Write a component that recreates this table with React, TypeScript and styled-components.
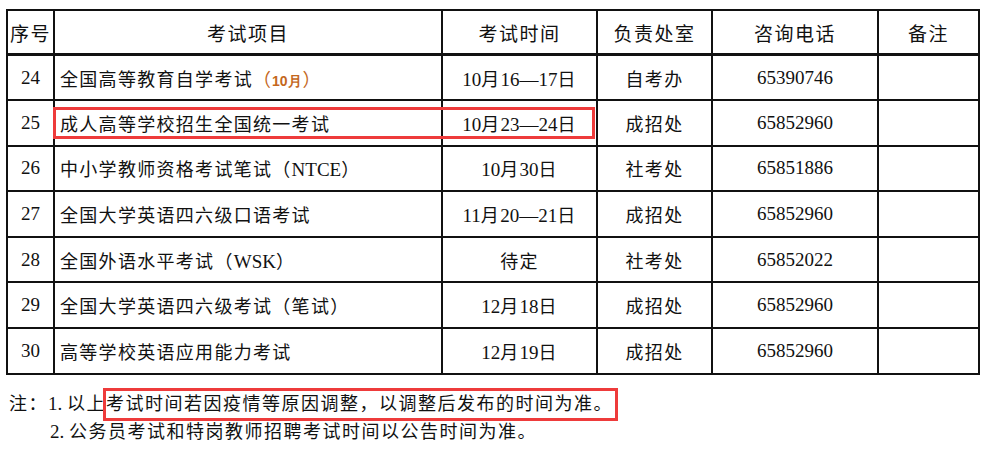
import React from "react";
import styled, { createGlobalStyle } from "styled-components";

const Global = createGlobalStyle`
  html, body { margin: 0; padding: 0; background: #fff; }
  body { font-family: "Liberation Serif", "Noto Sans CJK SC", serif; color: #111; }
  table { font-family: inherit; }
`;

const Page = styled.div`
  width: 985px;
  height: 458px;
  padding: 9px 0 0 6px;
  box-sizing: border-box;
  overflow: hidden;
  font-family: "Liberation Serif", "Noto Sans CJK SC", serif;
`;

const TableWrap = styled.div`
  position: relative;
  width: 972px;
`;

const Table = styled.table`
  border-collapse: collapse;
  table-layout: fixed;
  width: 972px;
  font-size: 18px;
  font-family: "Liberation Serif", "Noto Sans CJK SC", serif;
  color: #111;
`;

const HeadCell = styled.th`
  border: 2px solid #111;
  border-bottom-width: 3px;
  height: 42px;
  padding: 0;
  font-weight: normal;
  font-size: 19px;
  letter-spacing: 1.5px;
  text-align: center;
  vertical-align: middle;
`;

const Row = styled.tr`
  height: 45.6px;
`;

const Cell = styled.td<{ $align?: "left" | "center" }>`
  border: 2px solid #111;
  padding: 0 0 0 ${(p) => (p.$align === "left" ? "5px" : "0")};
  text-align: ${(p) => p.$align ?? "center"};
  vertical-align: middle;
  letter-spacing: 1.3px;
  white-space: nowrap;
`;

const Num = styled.span`
  font-family: "Liberation Serif", "Times New Roman", serif;
  font-size: 19px;
  letter-spacing: 0;
`;

const Month = styled.span`
  color: #c4671c;
  font-size: 18px;
  letter-spacing: 0;
`;

const MonthBold = styled.span`
  font-family: "Liberation Sans", Arial, sans-serif;
  font-weight: bold;
  font-size: 14px;
  margin: 0 1px;
`;

const Highlight = styled.div`
  position: absolute;
  left: 47px;
  top: 98px;
  width: 542px;
  height: 32px;
  box-sizing: border-box;
  border: 3px solid #ee3b3b;
  pointer-events: none;
`;

const Notes = styled.div`
  margin-top: 15px;
  padding-left: 3px;
  font-size: 18px;
  letter-spacing: 1.5px;
  line-height: 27px;
`;

const NoteLine = styled.div<{ $indent?: boolean }>`
  padding-left: ${(p) => (p.$indent ? "41px" : "0")};
  white-space: nowrap;
`;

const NoteNum = styled.span`
  font-family: "Liberation Serif", "Times New Roman", serif;
  font-size: 19px;
  letter-spacing: 0;
`;

const Boxed = styled.span`
  outline: 3px solid #ee3b3b;
  padding: 3px 2px 4px 0;
`;

const widths = [47, 388, 155, 115, 166, 101];

type R = { no: string; name: React.ReactNode; date: React.ReactNode; dept: string; tel: string };

const D = ({ children }: { children: React.ReactNode }) => <Num>{children}</Num>;

const rows: R[] = [
  {
    no: "24",
    name: (
      <>
        全国高等教育自学考试<Month>（<MonthBold>10月</MonthBold>）</Month>
      </>
    ),
    date: (
      <>
        <D>10</D>月<D>16—17</D>日
      </>
    ),
    dept: "自考办",
    tel: "65390746",
  },
  {
    no: "25",
    name: "成人高等学校招生全国统一考试",
    date: (
      <>
        <D>10</D>月<D>23—24</D>日
      </>
    ),
    dept: "成招处",
    tel: "65852960",
  },
  {
    no: "26",
    name: (
      <>
        中小学教师资格考试笔试（<D>NTCE</D>）
      </>
    ),
    date: (
      <>
        <D>10</D>月<D>30</D>日
      </>
    ),
    dept: "社考处",
    tel: "65851886",
  },
  {
    no: "27",
    name: "全国大学英语四六级口语考试",
    date: (
      <>
        <D>11</D>月<D>20—21</D>日
      </>
    ),
    dept: "成招处",
    tel: "65852960",
  },
  {
    no: "28",
    name: (
      <>
        全国外语水平考试（<D>WSK</D>）
      </>
    ),
    date: "待定",
    dept: "社考处",
    tel: "65852022",
  },
  {
    no: "29",
    name: "全国大学英语四六级考试（笔试）",
    date: (
      <>
        <D>12</D>月<D>18</D>日
      </>
    ),
    dept: "成招处",
    tel: "65852960",
  },
  {
    no: "30",
    name: "高等学校英语应用能力考试",
    date: (
      <>
        <D>12</D>月<D>19</D>日
      </>
    ),
    dept: "成招处",
    tel: "65852960",
  },
];

export default function App() {
  return (
    <Page>
      <Global />
      <TableWrap>
        <Table>
          <colgroup>
            {widths.map((w, i) => (
              <col key={i} style={{ width: w }} />
            ))}
          </colgroup>
          <thead>
            <tr>
              <HeadCell>序号</HeadCell>
              <HeadCell>考试项目</HeadCell>
              <HeadCell>考试时间</HeadCell>
              <HeadCell>负责处室</HeadCell>
              <HeadCell>咨询电话</HeadCell>
              <HeadCell>备注</HeadCell>
            </tr>
          </thead>
          <tbody>
            {rows.map((r) => (
              <Row key={r.no}>
                <Cell>
                  <Num>{r.no}</Num>
                </Cell>
                <Cell $align="left">{r.name}</Cell>
                <Cell>{r.date}</Cell>
                <Cell>{r.dept}</Cell>
                <Cell>
                  <Num>{r.tel}</Num>
                </Cell>
                <Cell />
              </Row>
            ))}
          </tbody>
        </Table>
        <Highlight />
      </TableWrap>
      <Notes>
        <NoteLine>
          注：<NoteNum>1. </NoteNum>以上<Boxed>考试时间若因疫情等原因调整，以调整后发布的时间为准。</Boxed>
        </NoteLine>
        <NoteLine $indent>
          <NoteNum>2. </NoteNum>公务员考试和特岗教师招聘考试时间以公告时间为准。
        </NoteLine>
      </Notes>
    </Page>
  );
}
